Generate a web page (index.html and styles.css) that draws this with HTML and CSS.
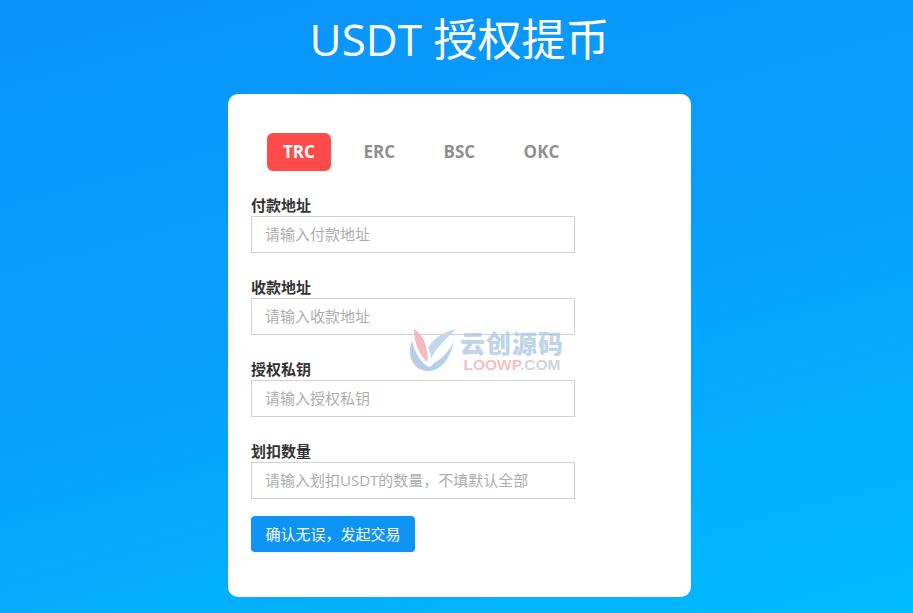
FILE: index.html
```html
<!DOCTYPE html>
<html lang="zh">
<head>
<meta charset="utf-8">
<title>USDT 授权提币</title>
<link rel="stylesheet" href="styles.css">
</head>
<body>
<main class="page">
  <h1 class="title">USDT 授权提币</h1>
  <section class="card">
    <nav class="tabs">
      <a class="tab active">TRC</a>
      <a class="tab">ERC</a>
      <a class="tab">BSC</a>
      <a class="tab">OKC</a>
    </nav>
    <form class="form">
      <div class="field">
        <label class="label">付款地址</label>
        <input class="input" placeholder="请输入付款地址">
      </div>
      <div class="field">
        <label class="label">收款地址</label>
        <input class="input" placeholder="请输入收款地址">
      </div>
      <div class="field">
        <label class="label">授权私钥</label>
        <input class="input" placeholder="请输入授权私钥">
      </div>
      <div class="field">
        <label class="label">划扣数量</label>
        <input class="input" placeholder="请输入划扣USDT的数量，不填默认全部">
      </div>
      <button class="submit" type="button">确认无误，发起交易</button>
    </form>
  </section>
</main>
<div class="watermark">
  <svg class="wm-logo" viewBox="0 0 48 44" width="48" height="44">
    <path d="M6 1 C14 6 18 14 19 24 C20 28 20 31 19 34 C11 26 6 15 6 1Z" fill="#f4b9bb"/>
    <path d="M48 1 C36 4 26 9 20 20 C22 24 23 27 23 31 C28 20 38 11 48 1Z" fill="#c3d6ea"/>
    <path d="M4 13 C-2 28 6 43 20 43 C32 43 41 33 46 14 C40 24 34 31 26 35 C24 37 23 39 21 39 C13 35 7 25 4 13Z" fill="#b7cee6"/>
  </svg>
  <div class="wm-text">
    <span class="wm-cn">云创源码</span>
    <span class="wm-en"><span class="wm-pink">LOOWP</span>.COM</span>
  </div>
</div>
</body>
</html>
```

FILE: styles.css
```css
* { box-sizing: border-box; }
html, body { height: 100%; }
body {
  margin: 0;
  overflow: hidden;
  background: linear-gradient(165deg, #0b93fa 0%, #08a0fd 50%, #00bbff 100%);
  font-family: "Open Sans", "Noto Sans CJK SC", sans-serif;
}
.page {
  display: flex;
  flex-direction: column;
  align-items: center;
  padding-left: 6px;
}
.title {
  margin: 0;
  height: 94px;
  padding-top: 9px;
  font-size: 44px;
  line-height: 60px;
  font-weight: 400;
  color: #fff;
}
.card {
  width: 463px;
  height: 503px;
  background: #fff;
  border-radius: 10px;
  padding: 39px 23px 0;
}
.tabs {
  display: flex;
  padding-left: 16px;
  gap: 16.5px;
}
.tab {
  height: 38px;
  padding: 0 16px;
  border-radius: 6px;
  font-size: 17px;
  font-weight: 700;
  line-height: 38px;
  text-align: center;
  color: #909090;
}
.active {
  background: #ff4b4b;
  color: #fff;
}
.form {
  margin-top: 24px;
  display: flex;
  flex-direction: column;
  align-items: flex-start;
}
.field {
  display: flex;
  flex-direction: column;
  width: 324px;
  height: 82px;
}
.label {
  font-size: 15px;
  font-weight: 700;
  line-height: 21px;
  color: #333;
}
.input {
  width: 324px;
  height: 37px;
  border: 1px solid #d2d2d2;
  padding: 0 14px 2px 13px;
  font: 15px/33px "Open Sans", "Noto Sans CJK SC", sans-serif;
  color: #333;
  background: #fff;
  outline: none;
}
.input::placeholder { color: #adadad; opacity: 1; }
.submit {
  margin-top: -7px;
  width: 164px;
  height: 36px;
  padding: 0;
  border: 0;
  border-radius: 4px;
  background: #0e94f5;
  color: #fff;
  font: 15px/36px "Open Sans", "Noto Sans CJK SC", sans-serif;
}
.watermark {
  position: absolute;
  left: 408px;
  top: 328px;
  display: flex;
  align-items: center;
  gap: 4px;
  pointer-events: none;
}
.wm-text {
  display: flex;
  flex-direction: column;
  align-items: center;
}
.wm-cn {
  font: 900 25px/29px "Noto Sans CJK SC", sans-serif;
  letter-spacing: 1px;
  color: rgba(175, 200, 228, .8);
}
.wm-en {
  font: 700 15.5px/15px "Liberation Sans", sans-serif;
  color: rgba(200, 205, 215, .85);
}
.wm-pink { color: rgba(244, 185, 187, .9); }
```
